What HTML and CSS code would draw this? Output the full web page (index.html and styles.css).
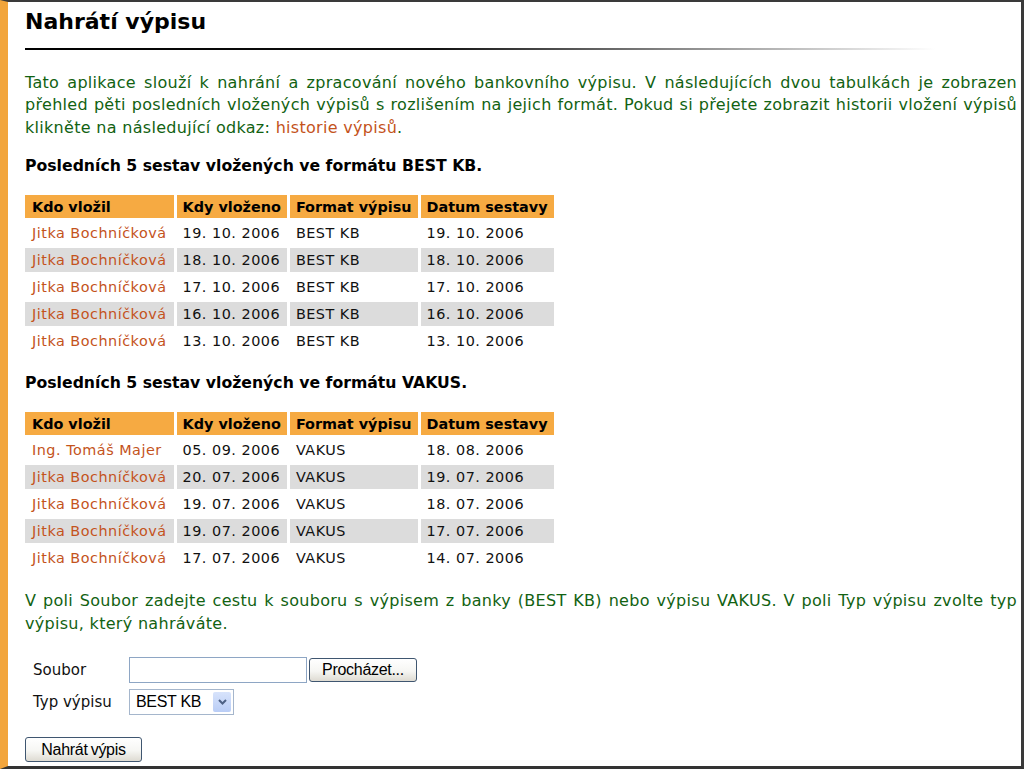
FILE: index.html
```html
<!DOCTYPE html>
<html lang="cs">
<head>
<meta charset="utf-8">
<title>Nahrátí výpisu</title>
<link rel="stylesheet" href="styles.css">
</head>
<body>
<div class="frame">
  <h1 class="title">Nahrátí výpisu</h1>
  <div class="rule"></div>
  <p class="info">Tato aplikace slouží k nahrání a zpracování nového bankovního výpisu. V následujících dvou tabulkách je zobrazen přehled pěti posledních vložených výpisů s rozlišením na jejich formát. Pokud si přejete zobrazit historii vložení výpisů klikněte na následující odkaz: <a class="link" href="#">historie výpisů</a>.</p>

  <h2 class="section">Posledních 5 sestav vložených ve formátu BEST KB.</h2>
  <table class="data">
    <thead>
      <tr><th class="first">Kdo vložil</th><th>Kdy vloženo</th><th>Format výpisu</th><th>Datum sestavy</th></tr>
    </thead>
    <tbody>
      <tr><td class="first"><a class="link" href="#">Jitka Bochníčková</a></td><td>19. 10. 2006</td><td>BEST KB</td><td>19. 10. 2006</td></tr>
      <tr class="alt"><td class="first"><a class="link" href="#">Jitka Bochníčková</a></td><td>18. 10. 2006</td><td>BEST KB</td><td>18. 10. 2006</td></tr>
      <tr><td class="first"><a class="link" href="#">Jitka Bochníčková</a></td><td>17. 10. 2006</td><td>BEST KB</td><td>17. 10. 2006</td></tr>
      <tr class="alt"><td class="first"><a class="link" href="#">Jitka Bochníčková</a></td><td>16. 10. 2006</td><td>BEST KB</td><td>16. 10. 2006</td></tr>
      <tr><td class="first"><a class="link" href="#">Jitka Bochníčková</a></td><td>13. 10. 2006</td><td>BEST KB</td><td>13. 10. 2006</td></tr>
    </tbody>
  </table>

  <h2 class="section">Posledních 5 sestav vložených ve formátu VAKUS.</h2>
  <table class="data">
    <thead>
      <tr><th class="first">Kdo vložil</th><th>Kdy vloženo</th><th>Format výpisu</th><th>Datum sestavy</th></tr>
    </thead>
    <tbody>
      <tr><td class="first"><a class="link" href="#">Ing. Tomáš Majer</a></td><td>05. 09. 2006</td><td>VAKUS</td><td>18. 08. 2006</td></tr>
      <tr class="alt"><td class="first"><a class="link" href="#">Jitka Bochníčková</a></td><td>20. 07. 2006</td><td>VAKUS</td><td>19. 07. 2006</td></tr>
      <tr><td class="first"><a class="link" href="#">Jitka Bochníčková</a></td><td>19. 07. 2006</td><td>VAKUS</td><td>18. 07. 2006</td></tr>
      <tr class="alt"><td class="first"><a class="link" href="#">Jitka Bochníčková</a></td><td>19. 07. 2006</td><td>VAKUS</td><td>17. 07. 2006</td></tr>
      <tr><td class="first"><a class="link" href="#">Jitka Bochníčková</a></td><td>17. 07. 2006</td><td>VAKUS</td><td>14. 07. 2006</td></tr>
    </tbody>
  </table>

  <p class="info info-2">V poli Soubor zadejte cestu k souboru s výpisem z banky (BEST KB) nebo výpisu VAKUS. V poli Typ výpisu zvolte typ výpisu, který nahráváte.</p>

  <div class="form-grid">
    <span class="label">Soubor</span>
    <div class="file-row">
      <input class="text-input" type="text">
      <button class="btn btn-browse" type="button">Procházet...</button>
    </div>
    <span class="label">Typ výpisu</span>
    <div class="select">
      <span class="select-value">BEST KB</span>
      <span class="select-arrow"><svg width="9" height="6" viewBox="0 0 9 6"><path d="M1 1 L4.5 4.5 L8 1" fill="none" stroke="#4d6185" stroke-width="2"/></svg></span>
    </div>
  </div>

  <button class="btn btn-submit" type="button">Nahrát výpis</button>
</div>
</body>
</html>
```

FILE: styles.css
```css
html, body {
  margin: 0;
  padding: 0;
  background: #fff;
}

.frame {
  box-sizing: border-box;
  width: 1024px;
  height: 769px;
  overflow: hidden;
  border-top: 2px solid #3a3a3a;
  border-right: 3px solid #3a3a3a;
  border-bottom: 3px solid #333;
  border-left: 8px solid #f2a53c;
  padding: 0 4px 0 17px;
  font-family: "DejaVu Sans", Verdana, sans-serif;
  color: #111;
}

.title {
  margin: 7px 0 0;
  font-size: 22px;
  line-height: 26px;
  font-weight: bold;
  color: #000;
}

.rule {
  margin-top: 13px;
  width: 910px;
  height: 2px;
  background: linear-gradient(90deg, #000 0%, #111 45%, #8a8a8a 72%, #fff 100%);
}

.info {
  margin: 21.5px 0 0;
  font-size: 16px;
  line-height: 22.5px;
  letter-spacing: 0.3px;
  color: #126212;
  text-align: justify;
}

.info-2 {
  margin-top: 17px;
}

.link {
  color: #c4531c;
  text-decoration: none;
}

.section {
  margin: 16px 0 0;
  font-size: 15.7px;
  line-height: 22.5px;
  font-weight: bold;
  color: #000;
}

.data {
  margin: 14.5px 0 0 -3px;
  border-collapse: separate;
  border-spacing: 3px;
  font-size: 14.4px;
}

.data th,
.data td {
  padding: 0 6px;
  height: 24px;
  text-align: left;
  vertical-align: middle;
  white-space: nowrap;
}

.data th {
  height: 23px;
  background: #f6aa42;
  color: #000;
  font-weight: bold;
}

.data td {
  color: #111;
  letter-spacing: 0.5px;
}

.data .first {
  padding: 0 7px;
}

.data tr.alt td {
  background: #dcdcdc;
}

.form-grid {
  margin: 22px 0 0 8px;
  display: grid;
  grid-template-columns: 96px auto;
  row-gap: 6px;
  align-items: center;
  justify-content: start;
}

.label {
  font-size: 15px;
  color: #111;
}

.file-row {
  display: flex;
  align-items: center;
  gap: 2px;
}

.text-input {
  box-sizing: border-box;
  width: 178px;
  height: 26px;
  margin: 0;
  border: 1px solid #8ea6c4;
  background: #fff;
  padding: 0 3px;
}

.btn {
  box-sizing: border-box;
  margin: 0;
  padding: 0 6px;
  font-family: "Liberation Sans", Arial, sans-serif;
  font-size: 16px;
  letter-spacing: -0.3px;
  word-spacing: -1px;
  color: #000;
  border: 1px solid #3f5670;
  border-radius: 3px;
  background: linear-gradient(180deg, #ffffff 0%, #f6f6f3 55%, #dedbd2 100%);
}

.btn-browse {
  width: 108px;
  height: 24px;
}

.select {
  box-sizing: border-box;
  display: flex;
  align-items: center;
  justify-content: space-between;
  width: 105px;
  height: 26px;
  border: 1px solid #a5b6cc;
  padding: 0 2px 0 6px;
  font-family: "Liberation Sans", Arial, sans-serif;
  font-size: 16px;
  letter-spacing: -0.3px;
  color: #000;
  background: #fff;
}

.select-arrow {
  display: flex;
  align-items: center;
  justify-content: center;
  width: 18px;
  height: 20px;
  background: linear-gradient(180deg, #d7e3fb 0%, #b9cdf6 100%);
  border-radius: 2px;
}

.btn-submit {
  display: block;
  margin-top: 22px;
  width: 117px;
  height: 25px;
}
```
